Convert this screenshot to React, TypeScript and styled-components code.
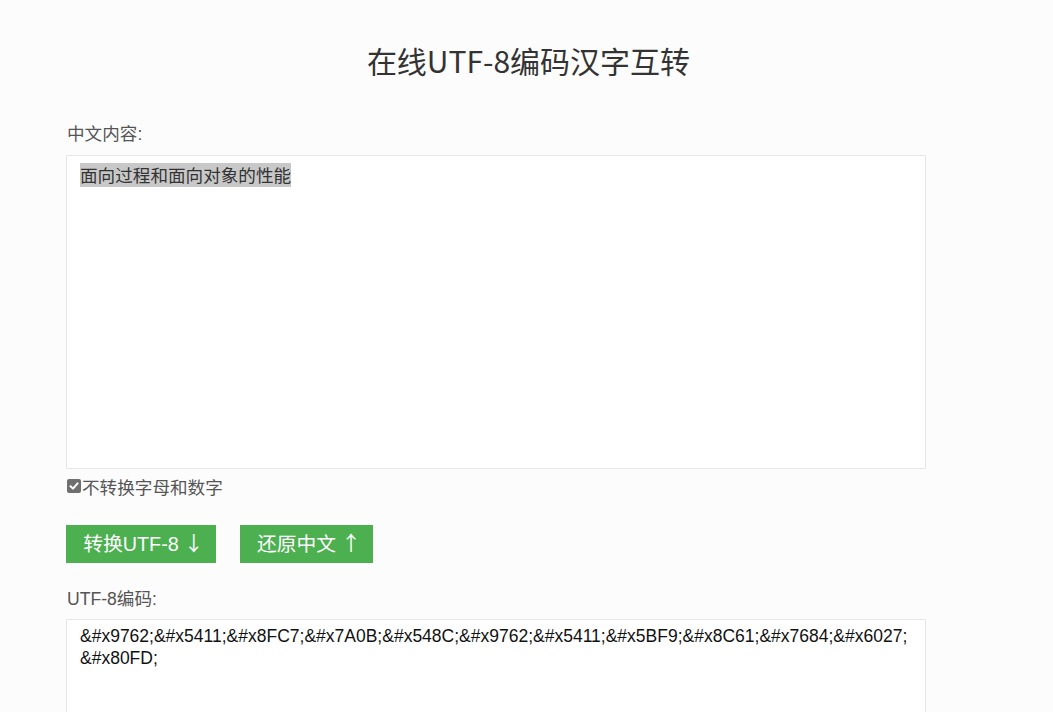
import React from "react";
import styled, { createGlobalStyle } from "styled-components";

const GlobalStyle = createGlobalStyle`
  html, body {
    margin: 0;
    padding: 0;
    background: #fcfcfc;
  }
  body {
    font-family: "Liberation Sans", "Noto Sans CJK SC", sans-serif;
    color: #333;
  }
`;

const Page = styled.div`
  padding: 42px 0 40px 66px;
  width: 860px;
`;

const Title = styled.h1`
  margin: 0 0 44px;
  width: 925px;
  text-align: center;
  font-size: 30px;
  line-height: 36px;
  font-weight: normal;
  color: #333;
  font-family: "Noto Sans CJK SC", sans-serif;
`;

const Label = styled.div<{ $gap: number }>`
  font-size: 17.6px;
  line-height: 24px;
  color: #555;
  margin: 0 0 ${(p) => p.$gap}px 1px;
`;

const TextBox = styled.div<{ $height: number; $padTop: number; $latin?: boolean }>`
  box-sizing: border-box;
  width: 860px;
  height: ${(p) => p.$height}px;
  background: #fff;
  border: 1px solid #e6e6e6;
  padding: ${(p) => p.$padTop}px 13px 0 13px;
  font-size: ${(p) => (p.$latin ? 17.5 : 17.6)}px;
  line-height: ${(p) => (p.$latin ? 22 : 24)}px;
  color: ${(p) => (p.$latin ? "#111" : "#333")};
  font-family: ${(p) =>
    p.$latin ? `"Liberation Sans", Arial, sans-serif` : `"Noto Sans CJK SC", sans-serif`};
  word-break: break-all;
  overflow: hidden;
`;

const Selected = styled.span`
  display: inline-block;
  height: 24px;
  line-height: 24px;
  background: #c8c8c8;
  color: #333;
`;

const CheckRow = styled.label`
  display: flex;
  align-items: center;
  margin-top: 5px;
  height: 24px;
  font-size: 17.6px;
  color: #555;
  font-family: "Noto Sans CJK SC", sans-serif;
`;

const CheckBox = styled.span`
  width: 14px;
  height: 14px;
  margin: 0 1px 0 1px;
  border-radius: 2px;
  background: #6f6f6f;
  display: inline-flex;
  align-items: center;
  justify-content: center;
`;

const ButtonRow = styled.div`
  display: flex;
  gap: 24px;
  margin: 27px 0 24px;
`;

const Button = styled.button<{ $width: number }>`
  width: ${(p) => p.$width}px;
  height: 38px;
  border: none;
  padding: 0 0 3px;
  background: #4caf50;
  color: #fff;
  font-size: 19.8px;
  font-family: "Liberation Sans", "Noto Sans CJK SC", sans-serif;
  cursor: pointer;
  display: flex;
  align-items: center;
  justify-content: center;
  gap: 5px;
`;

const Arrow = styled.span`
  font-family: "Noto Sans CJK SC", sans-serif;
  font-size: 20px;
  margin-right: -5px;
`;

const output =
  "&#x9762;&#x5411;&#x8FC7;&#x7A0B;&#x548C;&#x9762;&#x5411;&#x5BF9;&#x8C61;&#x7684;&#x6027;&#x80FD;";

export default function App() {
  return (
    <>
      <GlobalStyle />
      <Page>
        <Title>在线UTF-8编码汉字互转</Title>
        <Label $gap={9}>中文内容:</Label>
        <TextBox $height={314} $padTop={7}>
          <Selected>面向过程和面向对象的性能</Selected>
        </TextBox>
        <CheckRow>
          <CheckBox>
            <svg width="10" height="10" viewBox="0 0 10 10">
              <path d="M1.5 5.2 L4 7.6 L8.6 2.4" fill="none" stroke="#fff" strokeWidth="2" strokeLinecap="round" strokeLinejoin="round" />
            </svg>
          </CheckBox>
          不转换字母和数字
        </CheckRow>
        <ButtonRow>
          <Button $width={150}>
            <span>转换UTF-8</span>
            <Arrow>↓</Arrow>
          </Button>
          <Button $width={133}>
            <span>还原中文</span>
            <Arrow>↑</Arrow>
          </Button>
        </ButtonRow>
        <Label $gap={8}>UTF-8编码:</Label>
        <TextBox $height={200} $padTop={5} $latin>
          {output}
        </TextBox>
      </Page>
    </>
  );
}
